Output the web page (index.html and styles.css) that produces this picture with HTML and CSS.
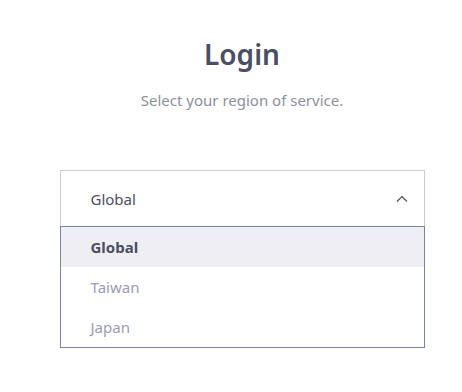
FILE: index.html
```html
<!DOCTYPE html>
<html>
<head>
<meta charset="utf-8">
<link rel="stylesheet" href="styles.css">
</head>
<body>
<div class="page">
  <h1 class="title">Login</h1>
  <p class="subtitle">Select your region of service.</p>
  <div class="select">
    <div class="select-box">
      <span class="value">Global</span>
      <svg class="chev" width="12" height="7" viewBox="0 0 12 7"><path d="M1 6.5 L6 1.5 L11 6.5" fill="none" stroke="#4a4f63" stroke-width="1.2"/></svg>
    </div>
    <ul class="menu">
      <li class="opt active">Global</li>
      <li class="opt">Taiwan</li>
      <li class="opt">Japan</li>
    </ul>
  </div>
</div>
</body>
</html>
```
FILE: styles.css
```css
* { box-sizing: border-box; }
html, body { margin: 0; padding: 0; background: #fff; }
body { font-family: "Noto Sans", "Open Sans", sans-serif; }
.page { width: 462px; padding: 36px 0 0 22px; display: flex; flex-direction: column; align-items: center; }
.title { margin: 0; font-size: 28px; font-weight: 600; color: #4a4f63; line-height: 36px; height: 36px; }
.subtitle { margin: 18px 0 0; font-size: 15px; color: #8c90a0; line-height: 20px; }
.select { margin-top: 60px; width: 365px; }
.select-box { height: 56px; border: 1px solid #c8ccd8; border-bottom: none; display: flex; align-items: center; justify-content: space-between; padding: 0 16px 0 30px; }
.value { font-size: 15px; color: #4a4f63; }
.chev { display: block; }
.menu { list-style: none; margin: 0; padding: 0; border: 1px solid #7a82a8; }
.opt { height: 40px; display: flex; align-items: center; padding-left: 30px; font-size: 15px; color: #9a9cb0; }
.opt.active { background: #efeff3; color: #4a4f63; font-weight: 700; }
```
